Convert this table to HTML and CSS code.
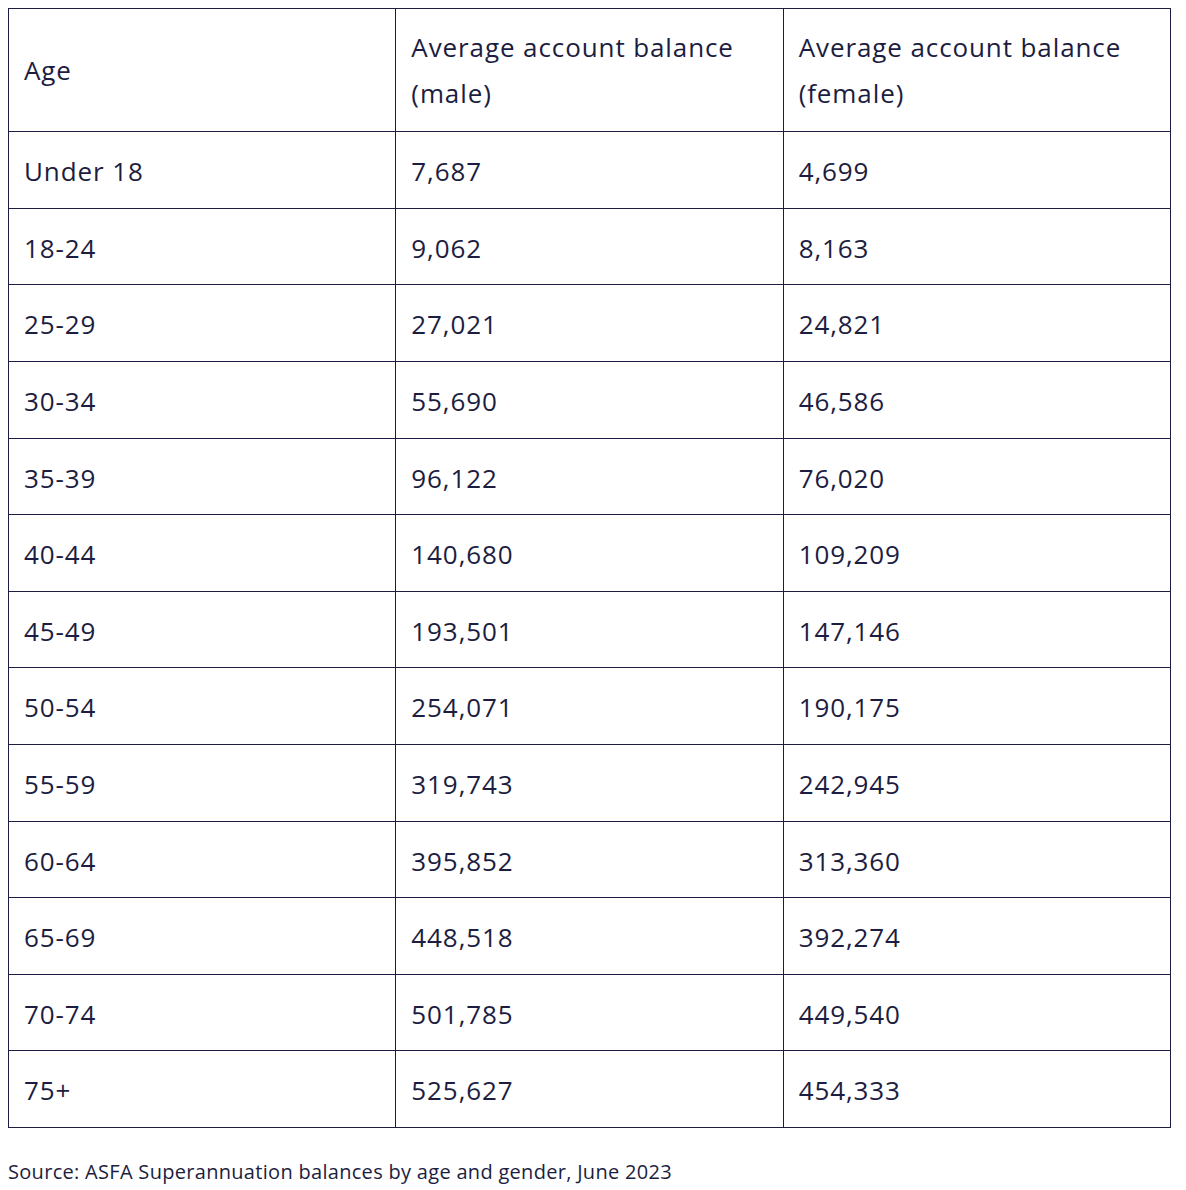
FILE: index.html
```html
<!DOCTYPE html>
<html>
<head>
<meta charset="utf-8">
<link rel="stylesheet" href="styles.css">
</head>
<body>
<table class="data">
<thead>
<tr><th>Age</th><th>Average account balance (male)</th><th>Average account balance (female)</th></tr>
</thead>
<tbody>
<tr><td>Under 18</td><td>7,687</td><td>4,699</td></tr>
<tr><td>18-24</td><td>9,062</td><td>8,163</td></tr>
<tr><td>25-29</td><td>27,021</td><td>24,821</td></tr>
<tr><td>30-34</td><td>55,690</td><td>46,586</td></tr>
<tr><td>35-39</td><td>96,122</td><td>76,020</td></tr>
<tr><td>40-44</td><td>140,680</td><td>109,209</td></tr>
<tr><td>45-49</td><td>193,501</td><td>147,146</td></tr>
<tr><td>50-54</td><td>254,071</td><td>190,175</td></tr>
<tr><td>55-59</td><td>319,743</td><td>242,945</td></tr>
<tr><td>60-64</td><td>395,852</td><td>313,360</td></tr>
<tr><td>65-69</td><td>448,518</td><td>392,274</td></tr>
<tr><td>70-74</td><td>501,785</td><td>449,540</td></tr>
<tr><td>75+</td><td>525,627</td><td>454,333</td></tr>
</tbody>
</table>
<p class="source">Source: ASFA Superannuation balances by age and gender, June 2023</p>
</body>
</html>
```
FILE: styles.css
```css
body {
  margin: 8px;
  background: #ffffff;
  color: #1c1d40;
  font-family: "Open Sans", "Lato", sans-serif;
}
.data {
  border-collapse: collapse;
  width: 1163px;
  table-layout: fixed;
}
.data th,
.data td {
  border: 1px solid #1c1d40;
  font-size: 26px;
  letter-spacing: 0.9px;
  line-height: 45.6px;
  font-weight: 400;
  text-align: left;
  vertical-align: middle;
}
.data th {
  padding: 16px 15px 15px;
}
.data td {
  padding: 17px 15px 13px;
}
.source {
  margin: 29px 0 0;
  font-size: 20px;
  letter-spacing: 0.3px;
  line-height: 30px;
}
```
